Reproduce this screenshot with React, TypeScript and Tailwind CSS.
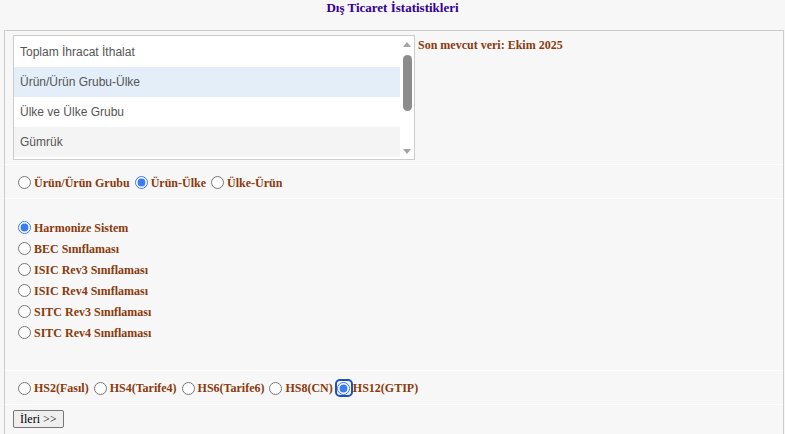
import React from "react";

const serif = "font-['Liberation_Serif','Times_New_Roman',serif]";
const sans = "font-['Liberation_Sans',Arial,sans-serif]";

const listItems = [
  { label: "Toplam İhracat İthalat", bg: "bg-white" },
  { label: "Ürün/Ürün Grubu-Ülke", bg: "bg-[#e3eef9]" },
  { label: "Ülke ve Ülke Grubu", bg: "bg-white" },
  { label: "Gümrük", bg: "bg-[#f4f4f4]" },
];

const classifications = [
  "Harmonize Sistem",
  "BEC Sınıflaması",
  "ISIC Rev3 Sınıflaması",
  "ISIC Rev4 Sınıflaması",
  "SITC Rev3 Sınıflaması",
  "SITC Rev4 Sınıflaması",
];

const hsLevels = ["HS2(Fasıl)", "HS4(Tarife4)", "HS6(Tarife6)", "HS8(CN)", "HS12(GTIP)"];

function Radio({ name, checked, focused }: { name: string; checked?: boolean; focused?: boolean }) {
  const input = (
    <input
      type="radio"
      name={name}
      defaultChecked={checked}
      className="m-0 w-[13px] h-[13px] accent-[#3b7cf0]"
    />
  );
  if (focused) {
    return (
      <span className="inline-flex items-center justify-center ml-[2px] w-[18px] h-[18px] rounded-[5px] border-2 border-[#1c52b8]">
        {input}
      </span>
    );
  }
  return <span className="inline-flex items-center ml-[5px] mr-[3px]">{input}</span>;
}

function Scrollbar() {
  return (
    <div className="w-[14px] flex flex-col items-center">
      <div className="h-[16px] flex items-center">
        <div className="w-0 h-0 border-l-[4px] border-r-[4px] border-b-[5px] border-l-transparent border-r-transparent border-b-[#a3a3a3]" />
      </div>
      <div className="mt-[3px] w-[9px] h-[56px] rounded-[5px] bg-[#8c8c8c]" />
      <div className="flex-1" />
      <div className="h-[16px] flex items-center">
        <div className="w-0 h-0 border-l-[4px] border-r-[4px] border-t-[5px] border-l-transparent border-r-transparent border-t-[#a3a3a3]" />
      </div>
    </div>
  );
}

export default function App() {
  const label = `${serif} font-bold text-[12px] text-[#8a3a0c]`;
  return (
    <div className="w-[785px] h-[434px] overflow-hidden bg-[#f7f7f7]">
      <div className={`${serif} h-[30px] leading-[16px] text-center font-bold text-[13px] text-[#330099]`}>
        Dış Ticaret İstatistikleri
      </div>
      <div className="ml-[4px] mr-[1px] h-[404px] border-t border-l border-r border-[#cccccc] flex flex-col">
        <div className="h-[134px] flex items-start pl-[8px] pt-[4px] border-b border-white">
          <div className="w-[402px] h-[125px] border border-[#cccccc] bg-white flex">
            <div className="flex-1 pt-px">
              {listItems.map((it) => (
                <div
                  key={it.label}
                  className={`${sans} ${it.bg} h-[30px] flex items-center pl-[6px] text-[12px] text-[#555555]`}
                >
                  {it.label}
                </div>
              ))}
            </div>
            <Scrollbar />
          </div>
          <div className={`${label} ml-[3px] mt-[2px] leading-[16px]`}>Son mevcut veri: Ekim 2025</div>
        </div>

        <div className="h-[34px] flex items-center pl-[8px] pt-[2px] border-b border-white">
          <Radio name="yon" />
          <span className={label}>Ürün/Ürün Grubu</span>
          <Radio name="yon" checked />
          <span className={label}>Ürün-Ülke</span>
          <Radio name="yon" />
          <span className={label}>Ülke-Ürün</span>
        </div>

        <div className="h-[172px] flex flex-col pl-[8px] pt-[18px] border-b border-white">
          {classifications.map((c, i) => (
            <div key={c} className="h-[21px] flex items-center">
              <Radio name="sinif" checked={i === 0} />
              <span className={label}>{c}</span>
            </div>
          ))}
        </div>

        <div className="h-[34px] flex items-center pl-[8px] pt-px border-b border-white">
          {hsLevels.map((h, i) => (
            <React.Fragment key={h}>
              <Radio name="hs" checked={i === 4} focused={i === 4} />
              <span className={label}>{h}</span>
            </React.Fragment>
          ))}
        </div>

        <div className="flex items-start pl-[8px] pt-[5px]">
          <button
            className={`${serif} h-[18px] px-[6px] text-[12px] leading-none text-black bg-[#efefef] border border-[#767676] rounded-[2px]`}
          >
            İleri &gt;&gt;
          </button>
        </div>
      </div>
    </div>
  );
}
